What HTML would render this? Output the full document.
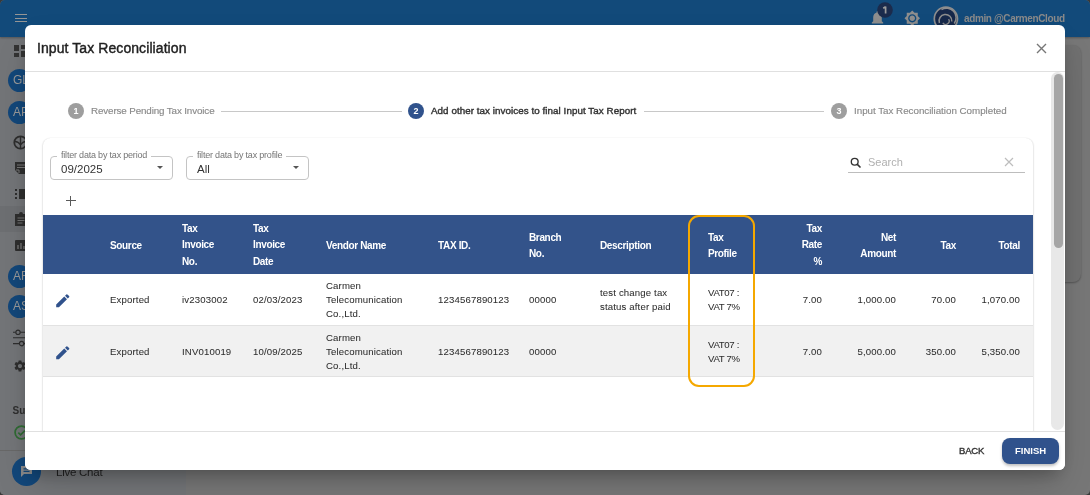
<!DOCTYPE html>
<html><head><meta charset="utf-8">
<style>
*{margin:0;padding:0;box-sizing:border-box}
html,body{width:1090px;height:495px;overflow:hidden;background:#3a3a3a}
body{font-family:"Liberation Sans",sans-serif;position:relative}
.abs{position:absolute}
#app{will-change:transform;position:absolute;left:0;top:0;width:1090px;height:495px;border-radius:5px;overflow:hidden;background:#777}
#hdr{left:0;top:0;width:1090px;height:37px;background:#124a7a;box-shadow:0 1px 2px rgba(0,0,0,.28)}
#side{left:0;top:37px;width:186px;height:458px;background:#737578}
.t{position:absolute;white-space:nowrap;line-height:1}
#modal{left:25px;top:25px;width:1040px;height:445px;background:#fff;border-radius:6px;box-shadow:0 10px 16px -6px rgba(0,0,0,.22),0 20px 36px -6px rgba(0,0,0,.14),0 4px 24px -4px rgba(0,0,0,.07)}
.step{position:absolute;top:103px;width:16px;height:16px;border-radius:50%;color:#fff;font-size:9px;font-weight:bold;text-align:center;line-height:16px}
.sline{position:absolute;top:111px;height:1px;background:#c8c8c8}
.stxt{position:absolute;top:104.6px;font-size:9.8px;line-height:12px;white-space:nowrap;color:#8a8a8a;letter-spacing:-0.03px;-webkit-text-stroke:0.15px #8a8a8a;letter-spacing:-0.12px}
.fld{position:absolute;top:156px;height:24px;border:1px solid #c4c4c4;border-radius:4px}
.lbl{position:absolute;top:-7.5px;left:6px;background:#fff;padding:0 4px;font-size:9px;color:#757575;line-height:11px;white-space:nowrap;letter-spacing:-0.2px}
.val{position:absolute;left:10px;top:6px;font-size:11.5px;color:#333;line-height:12px}
.arr{position:absolute;top:9px;width:0;height:0;border-left:3px solid transparent;border-right:3px solid transparent;border-top:3px solid #555}
.th{position:absolute;color:#fff;font-weight:bold;font-size:10px;line-height:16.6px;white-space:nowrap;letter-spacing:-0.35px}
.td{position:absolute;color:#2e2e2e;font-size:9.6px;line-height:13.9px;white-space:nowrap;letter-spacing:0.15px;-webkit-text-stroke:0.05px #2e2e2e}
.r{text-align:right}
</style></head><body>
<div id="app">
  <div class="abs" id="side"></div>
  <div class="abs" id="hdr"></div>
  <!-- header contents -->
  <div class="abs" style="left:14.5px;top:14px;width:12.5px;height:1.3px;background:#959595"></div>
  <div class="abs" style="left:14.5px;top:17.6px;width:12.5px;height:1.3px;background:#959595"></div>
  <div class="abs" style="left:14.5px;top:21.1px;width:12.5px;height:1.3px;background:#959595"></div>
  <svg class="abs" style="left:870.5px;top:10px" width="13" height="16" viewBox="0 0 13 16"><path d="M6.5 1.2c-.6 0-1 .4-1 1v.5C3.5 3.2 2.2 5 2.2 7.2v4L.8 12.6v1h11.4v-1l-1.4-1.4v-4c0-2.2-1.3-4-3.3-4.5v-.5c0-.6-.4-1-1-1z" fill="#8e8e8e"/></svg>
  <svg class="abs" style="left:877px;top:2px" width="16" height="16" viewBox="0 0 16 16"><circle cx="8" cy="8" r="7.8" fill="#1b2b4c"/><path d="M8.6 4.6v7M8.6 4.8L6.2 6.2" stroke="#9c9c9c" stroke-width="1.7" fill="none"/></svg>
  <svg class="abs" style="left:903.8px;top:10px" width="16.5" height="16.5" viewBox="0 0 24 24"><path fill="#8e8e8e" d="M20 8.69V4h-4.69L12 .69 8.69 4H4v4.69L.69 12 4 15.310V20h4.69L12 23.31 15.31 20H20v-4.69L23.31 12 20 8.69zM12 18c-3.31 0-6-2.690-6-6s2.69-6 6-6 6 2.69 6 6-2.69 6-6 6zm0-10c-2.21 0-4 1.79-4 4s1.79 4 4 4 4-1.790 4-4-1.79-4-4-4z"/></svg>
  <svg class="abs" style="left:932.5px;top:6px" width="26" height="26" viewBox="0 0 26 26"><circle cx="12.9" cy="12.7" r="11.6" fill="#16284a" stroke="#8e8e8e" stroke-width="1.7"/><path d="M8.5 3.6A9.6 9.6 0 0 1 21.2 17.5" fill="none" stroke="#8e8e8e" stroke-width="1.4"/><path d="M6.4 17A6.4 6.4 0 1 1 18.8 15.5" fill="none" stroke="#8e8e8e" stroke-width="1.5"/><path d="M9.8 16.8A3 3 0 0 0 15.6 13.2" fill="none" stroke="#8e8e8e" stroke-width="1.3"/></svg>
  <div class="t" style="left:964px;top:14px;font-size:10px;font-weight:bold;color:#8a8a8a;letter-spacing:-0.38px">admin @CarmenCloud</div>
  <!-- sidebar icons -->
  <div class="abs" style="left:14px;top:45px;width:5px;height:6px;background:#333"></div>
  <div class="abs" style="left:14px;top:52.5px;width:5px;height:4.5px;background:#333"></div>
  <div class="abs" style="left:20.5px;top:45px;width:6px;height:4px;background:#333"></div>
  <div class="abs" style="left:20.5px;top:50.5px;width:6px;height:6.5px;background:#333"></div>
  <div class="abs" style="left:8px;top:68.5px;width:23px;height:23px;border-radius:50%;background:#12477a;color:#9a9a9a;font-size:12px;line-height:23px;padding-left:5px">GL</div>
  <div class="abs" style="left:8px;top:101px;width:23px;height:23px;border-radius:50%;background:#12477a;color:#9a9a9a;font-size:12px;line-height:23px;padding-left:5px">AP</div>
  <svg class="abs" style="left:13px;top:134.5px" width="15" height="15" viewBox="0 0 15 15"><circle cx="7.5" cy="7.5" r="6.2" fill="none" stroke="#2e2e2e" stroke-width="1.8"/><path d="M7.5 1.5v12M2 6.5c2.5 0 4 1 5.5 3.5M13 6.5c-2.5 0-4 1-5.5 3.5" fill="none" stroke="#2e2e2e" stroke-width="1.4"/></svg>
  <svg class="abs" style="left:15px;top:162px" width="12" height="12" viewBox="0 0 12 12"><path d="M0 0h12v12H4L0 8z" fill="#2e2e2e"/><path d="M2 3h9M2 5.5h9M1 8h3v3" stroke="#787878" stroke-width="1" fill="none"/></svg>
  <div class="abs" style="left:14.5px;top:188.5px;width:2px;height:2px;background:#2e2e2e"></div>
  <div class="abs" style="left:14.5px;top:192.5px;width:2px;height:2px;background:#2e2e2e"></div>
  <div class="abs" style="left:14.5px;top:196.5px;width:2px;height:2px;background:#2e2e2e"></div>
  <div class="abs" style="left:18.5px;top:188.5px;width:8px;height:10px;background:#2e2e2e"></div>
  <div class="abs" style="left:0;top:206px;width:25px;height:26px;background:#6d6f72"></div>
  <svg class="abs" style="left:15px;top:211.5px" width="12" height="14" viewBox="0 0 12 14"><path d="M0 2h4a2 2 0 0 1 4 0h4v12H0z" fill="#2e2e2e"/><path d="M2.5 6h7M2.5 8.5h7M2.5 11h5" stroke="#727272" stroke-width="1.1"/></svg>
  <svg class="abs" style="left:15px;top:240px" width="12" height="11" viewBox="0 0 12 11"><rect width="12" height="11" rx="1" fill="#2e2e2e"/><path d="M3 9V5M6 9V3M9 9V6" stroke="#787878" stroke-width="1.3"/></svg>
  <div class="abs" style="left:8px;top:264.5px;width:23px;height:23px;border-radius:50%;background:#12477a;color:#9a9a9a;font-size:12px;line-height:23px;padding-left:5px">AR</div>
  <div class="abs" style="left:8px;top:294.5px;width:23px;height:23px;border-radius:50%;background:#12477a;color:#9a9a9a;font-size:12px;line-height:23px;padding-left:5px">AS</div>
  <svg class="abs" style="left:13px;top:329px" width="14" height="18" viewBox="0 0 14 18"><path d="M0 3.3h2.6M7.4 3.3H14M0 8.8h14M0 14.6h6.2M11 14.6H14" stroke="#2e2e2e" stroke-width="1.1"/><circle cx="5" cy="3.3" r="2.2" fill="none" stroke="#2e2e2e" stroke-width="1.2"/><circle cx="8.6" cy="14.6" r="2.2" fill="none" stroke="#2e2e2e" stroke-width="1.2"/></svg>
  <svg class="abs" style="left:13px;top:358.5px" width="14" height="14" viewBox="0 0 24 24"><path fill="#2e2e2e" d="M19.14 12.94c.04-.3.06-.61.06-.94 0-.32-.02-.64-.07-.94l2.03-1.58a.49.49 0 0 0 .12-.61l-1.92-3.32a.49.49 0 0 0-.59-.22l-2.39.96c-.5-.38-1.03-.7-1.62-.94l-.36-2.54a.48.48 0 0 0-.48-.41h-3.84c-.24 0-.43.17-.47.41l-.36 2.54c-.59.24-1.13.57-1.62.94l-2.39-.96a.48.48 0 0 0-.59.22L2.74 8.87c-.12.21-.08.47.12.61l2.03 1.58c-.05.3-.09.63-.09.94s.02.64.07.94l-2.03 1.58a.49.49 0 0 0-.12.61l1.92 3.32c.12.22.37.29.59.22l2.39-.96c.5.38 1.03.7 1.62.94l.36 2.54c.05.24.24.41.48.41h3.84c.24 0 .44-.17.47-.41l.36-2.54c.59-.24 1.13-.56 1.62-.94l2.39.96c.22.08.47 0 .59-.22l1.92-3.32c.12-.22.07-.47-.12-.61l-2.01-1.58zM12 15.6c-1.98 0-3.6-1.62-3.6-3.6s1.62-3.6 3.6-3.6 3.6 1.62 3.6 3.6-1.62 3.6-3.6 3.6z"/></svg>
  <div class="t" style="left:12.5px;top:406px;font-size:10px;font-weight:bold;color:#2e2e2e">Su</div>
  <svg class="abs" style="left:13.5px;top:425px" width="15" height="15" viewBox="0 0 15 15"><circle cx="7.5" cy="7.5" r="6.4" fill="none" stroke="#2f6b33" stroke-width="1.7"/><path d="M4.3 7.6l2.3 2.3 4.3-4.3" fill="none" stroke="#2f6b33" stroke-width="1.7"/></svg>
  <div class="abs" style="left:0;top:450px;width:186px;height:1px;background:#686868"></div>
  <div class="abs" style="left:12px;top:457px;width:29px;height:29px;border-radius:50%;background:#12477a"></div>
  <svg class="abs" style="left:20px;top:465px" width="14" height="14" viewBox="0 0 14 14"><path d="M1 1h11v8H4l-3 3z" fill="#8a8a8a"/><path d="M3.5 3.8h6M3.5 6.3h6" stroke="#12477a" stroke-width="1.2"/></svg>
  <div class="t" style="left:56px;top:466.5px;font-size:11.5px;color:#222;letter-spacing:-0.25px">Live Chat</div>
  <!-- right background card -->
  <div class="abs" style="left:1040px;top:45px;width:41px;height:237px;border-radius:8px;background:#707070;box-shadow:0 1px 2px rgba(0,0,0,.3)"></div>

  <!-- modal -->
  <div class="abs" id="modal"></div>
  <div class="t" style="left:37px;top:41px;font-size:14px;color:#212121;-webkit-text-stroke:0.4px #212121;letter-spacing:0.08px">Input Tax Reconciliation</div>
  <svg class="abs" style="left:1036px;top:43px" width="11" height="11" viewBox="0 0 11 11"><path d="M1 1L10 10M10 1L1 10" stroke="#777" stroke-width="1.4"/></svg>
  <div class="abs" style="left:25px;top:71px;width:1040px;height:1px;background:#e0e0e0"></div>
  <!-- scrollbar -->
  <div class="abs" style="left:1051px;top:72px;width:13px;height:358px;background:#e8e8e8;border-radius:6.5px"></div>
  <div class="abs" style="left:1054px;top:74px;width:9px;height:174px;background:#a6a6a6;border-radius:4.5px"></div>
  <!-- stepper -->
  <div class="step" style="left:68px;background:#9e9e9e">1</div>
  <div class="stxt" style="left:91px">Reverse Pending Tax Invoice</div>
  <div class="sline" style="left:221px;width:181px"></div>
  <div class="step" style="left:408px;background:#30528c">2</div>
  <div class="stxt" style="left:431px;color:#333;letter-spacing:0.06px;-webkit-text-stroke:0.4px #333">Add other tax invoices to final Input Tax Report</div>
  <div class="sline" style="left:644px;width:180px"></div>
  <div class="step" style="left:831px;background:#9e9e9e">3</div>
  <div class="stxt" style="left:854px;letter-spacing:-0.02px">Input Tax Reconciliation Completed</div>
  <!-- card -->
  <div class="abs" style="left:42.5px;top:137.5px;width:990.5px;height:330px;border-radius:8px;box-shadow:0 1px 3px rgba(0,0,0,.08),0 0 1.5px rgba(0,0,0,.06),-1px 0 1px rgba(0,0,0,.05),1px 0 1px rgba(0,0,0,.05)"></div>
  <div class="fld" style="left:50px;width:123px"><span class="lbl">filter data by tax period</span><span class="val">09/2025</span><span class="arr" style="left:106px"></span></div>
  <div class="fld" style="left:186px;width:123px"><span class="lbl">filter data by tax profile</span><span class="val">All</span><span class="arr" style="left:106px"></span></div>
  <div class="abs" style="left:66px;top:200px;width:10px;height:1.1px;background:#5a5a5a"></div>
  <div class="abs" style="left:70.4px;top:195.6px;width:1.1px;height:10px;background:#5a5a5a"></div>
  <svg class="abs" style="left:849.5px;top:156.5px" width="12" height="12" viewBox="0 0 12 12"><circle cx="4.7" cy="4.7" r="3.4" fill="none" stroke="#333" stroke-width="1.35"/><path d="M7.1 7.1L10.5 10.5" stroke="#333" stroke-width="1.6"/></svg>
  <div class="t" style="left:868px;top:156.5px;font-size:11px;color:#b0b0b0">Search</div>
  <svg class="abs" style="left:1004px;top:157px" width="10" height="10" viewBox="0 0 10 10"><path d="M1 1L9 9M9 1L1 9" stroke="#bdbdbd" stroke-width="1.2"/></svg>
  <div class="abs" style="left:848px;top:172px;width:177px;height:1.3px;background:#bdbdbd"></div>
  <!-- table -->
  <div class="abs" style="left:43px;top:215px;width:990px;height:59px;background:#33538a"></div>
  <div class="abs" style="left:43px;top:274px;width:990px;height:52px;background:#fff;border-bottom:1px solid #e2e2e2"></div>
  <div class="abs" style="left:43px;top:326px;width:990px;height:51px;background:#f1f1f1;border-bottom:1px solid #e2e2e2"></div>
  <div class="th" style="left:110px;top:237.8px">Source</div>
  <div class="th" style="left:182px;top:220.8px">Tax<br>Invoice<br>No.</div>
  <div class="th" style="left:253px;top:220.8px">Tax<br>Invoice<br>Date</div>
  <div class="th" style="left:326px;top:237.8px">Vendor Name</div>
  <div class="th" style="left:438px;top:237.8px">TAX ID.</div>
  <div class="th" style="left:529px;top:229.8px">Branch<br>No.</div>
  <div class="th" style="left:600px;top:237.8px">Description</div>
  <div class="th" style="left:708px;top:229.8px">Tax<br>Profile</div>
  <div class="th r" style="right:268px;top:220.8px">Tax<br>Rate<br>%</div>
  <div class="th r" style="right:194px;top:229.8px">Net<br>Amount</div>
  <div class="th r" style="right:134px;top:237.8px">Tax</div>
  <div class="th r" style="right:70px;top:237.8px">Total</div>
  <!-- row 1 -->
  <svg class="abs" style="left:54px;top:291.5px" width="17.5" height="17.5" viewBox="0 0 24 24"><path fill="#30528c" d="M3 17.25V21h3.75L17.81 9.94l-3.75-3.75L3 17.25zM20.71 7.04a1 1 0 0 0 0-1.41l-2.34-2.34a1 1 0 0 0-1.41 0l-1.83 1.83 3.75 3.75 1.83-1.83z"/></svg>
  <div class="td" style="left:110px;top:293.4px">Exported</div>
  <div class="td" style="left:182px;top:293.4px">iv2303002</div>
  <div class="td" style="left:253px;top:293.4px">02/03/2023</div>
  <div class="td" style="left:326px;top:279.4px">Carmen<br>Telecomunication<br>Co.,Ltd.</div>
  <div class="td" style="left:438px;top:293.4px">1234567890123</div>
  <div class="td" style="left:529px;top:293.4px">00000</div>
  <div class="td" style="left:600px;top:286.4px">test change tax<br>status after paid</div>
  <div class="td" style="left:708px;top:286.4px;letter-spacing:-0.3px">VAT07 :<br>VAT 7%</div>
  <div class="td r" style="right:268px;top:293.4px">7.00</div>
  <div class="td r" style="right:194px;top:293.4px">1,000.00</div>
  <div class="td r" style="right:134px;top:293.4px">70.00</div>
  <div class="td r" style="right:70px;top:293.4px">1,070.00</div>
  <!-- row 2 -->
  <svg class="abs" style="left:54px;top:343.5px" width="17.5" height="17.5" viewBox="0 0 24 24"><path fill="#30528c" d="M3 17.25V21h3.75L17.81 9.94l-3.75-3.75L3 17.25zM20.71 7.04a1 1 0 0 0 0-1.41l-2.34-2.34a1 1 0 0 0-1.41 0l-1.83 1.83 3.75 3.75 1.83-1.83z"/></svg>
  <div class="td" style="left:110px;top:345.4px">Exported</div>
  <div class="td" style="left:182px;top:345.4px">INV010019</div>
  <div class="td" style="left:253px;top:345.4px">10/09/2025</div>
  <div class="td" style="left:326px;top:331.4px">Carmen<br>Telecomunication<br>Co.,Ltd.</div>
  <div class="td" style="left:438px;top:345.4px">1234567890123</div>
  <div class="td" style="left:529px;top:345.4px">00000</div>
  <div class="td" style="left:708px;top:338.4px;letter-spacing:-0.3px">VAT07 :<br>VAT 7%</div>
  <div class="td r" style="right:268px;top:345.4px">7.00</div>
  <div class="td r" style="right:194px;top:345.4px">5,000.00</div>
  <div class="td r" style="right:134px;top:345.4px">350.00</div>
  <div class="td r" style="right:70px;top:345.4px">5,350.00</div>
  <!-- orange highlight -->
  <div class="abs" style="left:688px;top:215px;width:67px;height:172px;border:2.5px solid #f5a800;border-radius:11px"></div>
  <!-- footer -->
  <div class="abs" style="left:25px;top:431px;width:1040px;height:39px;background:#fff;border-top:1px solid #e0e0e0;border-radius:0 0 6px 6px"></div>
  <div class="t" style="left:959px;top:446px;font-size:9.5px;color:#333;letter-spacing:-0.2px;-webkit-text-stroke:0.35px #333">BACK</div>
  <div class="abs" style="left:1002px;top:438px;width:57px;height:26px;border-radius:8px;background:#30528c;box-shadow:0 2px 3px rgba(0,0,0,.25)"></div>
  <div class="t" style="left:1015px;top:446px;font-size:9.5px;font-weight:bold;color:#fff;letter-spacing:0px">FINISH</div>
</div>
</body></html>
